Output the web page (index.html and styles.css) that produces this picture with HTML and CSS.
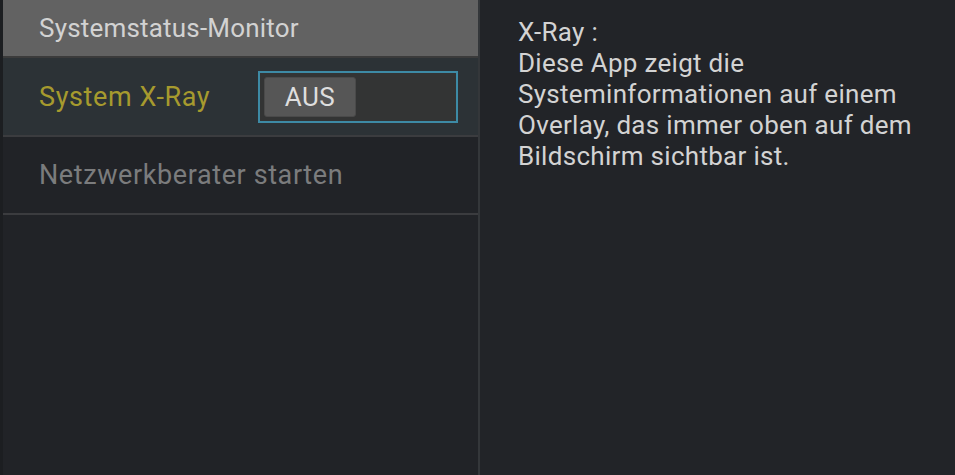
FILE: index.html
```html
<!DOCTYPE html>
<html lang="de">

<head>
    <meta charset="UTF-8" />
    <meta name="viewport" content="width=device-width, initial-scale=1.0" />
    <title>Systemstatus-Monitor</title>
    <link rel="stylesheet" href="styles.css">
</head>

<body>
    <div class="screen">
        <div class="menu">
            <div class="menu-title">Systemstatus-Monitor</div>
            <div class="menu-item selected">
                <span class="item-label">System X-Ray</span>
                <div class="toggle">
                    <button type="button" class="toggle-btn">AUS</button>
                </div>
            </div>
            <div class="menu-item">
                <span class="item-label">Netzwerkberater starten</span>
            </div>
        </div>
        <div class="info">
            <p>X-Ray :<br />Diese App zeigt die<br />Systeminformationen auf einem<br />Overlay, das immer oben auf dem<br />Bildschirm sichtbar ist.</p>
        </div>
    </div>
</body>

</html>
```

FILE: styles.css
```css
body {
  margin: 0;
  font-family: Roboto, 'Noto Sans', sans-serif;
  background-color: #222428;
}

.screen {
  display: flex;
  width: 955px;
  height: 475px;
  overflow: hidden;
}

.menu {
  width: 475px;
  border-left: 3px solid #1c1e21;
  border-right: 2px solid #34373a;
  background-color: #212327;
}

.menu-title {
  height: 56px;
  padding-left: 36px;
  display: flex;
  align-items: center;
  background-color: #626262;
  border-bottom: 2px solid #3b3b3b;
  color: #d2d2d2;
  font-size: 26px;
  letter-spacing: 0.2px;
}

.menu-item {
  height: 76px;
  padding-left: 36px;
  display: flex;
  align-items: center;
  border-bottom: 2px solid #3b3c3f;
  color: #7b7c7d;
  font-size: 27px;
  letter-spacing: 0.6px;
}

.menu-item.selected {
  height: 77px;
  background-color: #2c3236;
  color: #a69a2e;
}

.item-label {
  width: 219px;
  white-space: nowrap;
}

.toggle {
  width: 192px;
  height: 48px;
  border: 2px solid #3d8aa5;
  background-color: #333434;
  display: flex;
  align-items: center;
  padding-left: 4px;
}

.toggle-btn {
  width: 92px;
  height: 40px;
  background-color: #565656;
  border: 1px solid #4a4a4a;
  border-radius: 3px;
  color: #dedede;
  font-family: Roboto, sans-serif;
  font-size: 26px;
  letter-spacing: 0.5px;
  padding: 0;
}

.info {
  flex: 1;
  padding: 17px 0 0 38px;
  color: #d3d3d3;
  font-size: 26px;
  letter-spacing: 0.3px;
}

.info p {
  margin: 0;
  line-height: 31px;
}
```
